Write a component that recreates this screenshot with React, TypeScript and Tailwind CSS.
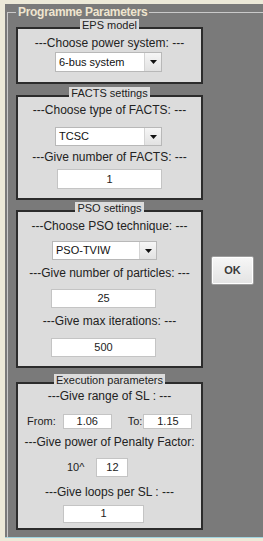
import type { ReactNode } from "react";

const Arrow = () => (
  <svg width="7" height="4" viewBox="0 0 7 4" className="block">
    <path d="M0 0H7L3.5 4Z" fill="#111" />
  </svg>
);

const Select = ({ value, className }: { value: string; className: string }) => (
  <div className={`flex bg-white border border-[#b8b8b8] ${className}`}>
    <span className="flex-1 pl-[3px] text-[11px] leading-[17px] text-[#111] self-center">{value}</span>
    <span className="w-[17px] flex items-center justify-center bg-gradient-to-b from-[#f6f6f6] to-[#e2e2e2] border-l border-[#d4d4d4]">
      <Arrow />
    </span>
  </div>
);

const Field = ({ value, className }: { value: string; className: string }) => (
  <div
    className={`flex items-center justify-center bg-white border border-[#c4c4c4] text-[11px] text-[#222] ${className}`}
  >
    {value}
  </div>
);

const Label = ({ children, className = "" }: { children: ReactNode; className?: string }) => (
  <div className={`text-center text-[12px] leading-[14px] text-[#222] whitespace-nowrap ${className}`}>
    {children}
  </div>
);

const Box = ({
  title,
  className,
  children,
}: {
  title: string;
  className: string;
  children: ReactNode;
}) => (
  <fieldset className={`w-[187px] border-2 border-[#2c2c2c] bg-[#dcdcdc] ${className}`}>
    <legend className="mx-auto px-[2px] pb-[5px] bg-[#dcdcdc] text-[11px] leading-[13px] text-[#222]">
      {title}
    </legend>
    {children}
  </fieldset>
);

export default function App() {
  return (
    <div className="w-[263px] h-[541px] bg-[#ece9d8] pt-[5px] pl-[5px] font-['Liberation_Sans',Arial,sans-serif] overflow-hidden">
      <div className="h-[534px] bg-[#7a7a7a] border-b border-[#9fd3df]">
        <fieldset className="-mt-[1px] ml-[2px] border-t border-l border-[#cacaca] h-[534px]">
          <legend className="ml-[8px] px-[2px] text-[12px] leading-[16px] font-bold tracking-[-0.3px] text-[#efe5cf]">
            Programme Parameters
          </legend>

          <div className="flex">
            <div className="ml-[8px] flex flex-col">
              {/* EPS model */}
              <Box title="EPS model" className="-mt-[1px] pb-[10px]">
                <Label className="-mt-[1px]">---Choose power system: ---</Label>
                <Select value="6-bus system" className="mt-[2px] ml-[37px] w-[107px] h-[20px]" />
              </Box>

              {/* FACTS settings */}
              <Box title="FACTS settings" className="mt-[3px] pb-[9px]">
                <Label className="-mt-[2px]">---Choose type of FACTS: ---</Label>
                <Select value="TCSC" className="mt-[10px] ml-[37px] w-[107px] h-[19px]" />
                <Label className="mt-[4px]">---Give number of FACTS: ---</Label>
                <Field value="1" className="mt-[5px] ml-[39px] w-[105px] h-[20px]" />
              </Box>

              {/* PSO settings */}
              <Box title="PSO settings" className="mt-[2px] pb-[9px]">
                <Label className="-mt-[1px]">---Choose PSO technique: ---</Label>
                <Select value="PSO-TVIW" className="mt-[8px] ml-[34px] w-[105px] h-[19px]" />
                <Label className="mt-[6px]">---Give number of particles: ---</Label>
                <Field value="25" className="mt-[9px] ml-[33px] w-[105px] h-[19px]" />
                <Label className="mt-[6px]">---Give max iterations: ---</Label>
                <Field value="500" className="mt-[10px] ml-[33px] w-[105px] h-[19px]" />
              </Box>

              {/* Execution parameters */}
              <Box title="Execution parameters" className="mt-[6px] pb-[5px]">
                <Label className="-mt-[3px]">---Give range of SL : ---</Label>
                <div className="mt-[10px] flex items-center text-[11px] text-[#222]">
                  <span className="ml-[9px]">From:</span>
                  <Field value="1.06" className="ml-[7px] w-[49px] h-[15px]" />
                  <span className="ml-[16px]">To:</span>
                  <Field value="1.15" className="ml-[1px] w-[49px] h-[15px]" />
                </div>
                <Label className="mt-[5px]">---Give power of Penalty Factor:</Label>
                <div className="mt-[9px] flex items-center text-[11px] text-[#222]">
                  <span className="ml-[49px]">10^</span>
                  <Field value="12" className="ml-[12px] w-[32px] h-[19px]" />
                </div>
                <Label className="mt-[8px]">---Give loops per SL : ---</Label>
                <Field value="1" className="mt-[6px] ml-[45px] w-[81px] h-[18px]" />
              </Box>
            </div>

            <button className="self-start mt-[236px] ml-[8px] w-[43px] h-[29px] rounded-[2px] border border-[#9c9c9c] bg-gradient-to-b from-[#f7f7f7] to-[#e3e3e3] shadow-[inset_0_0_0_1px_#ffffff] text-[11px] font-bold text-[#3a3a3a]">
              OK
            </button>
          </div>
        </fieldset>
      </div>
    </div>
  );
}
